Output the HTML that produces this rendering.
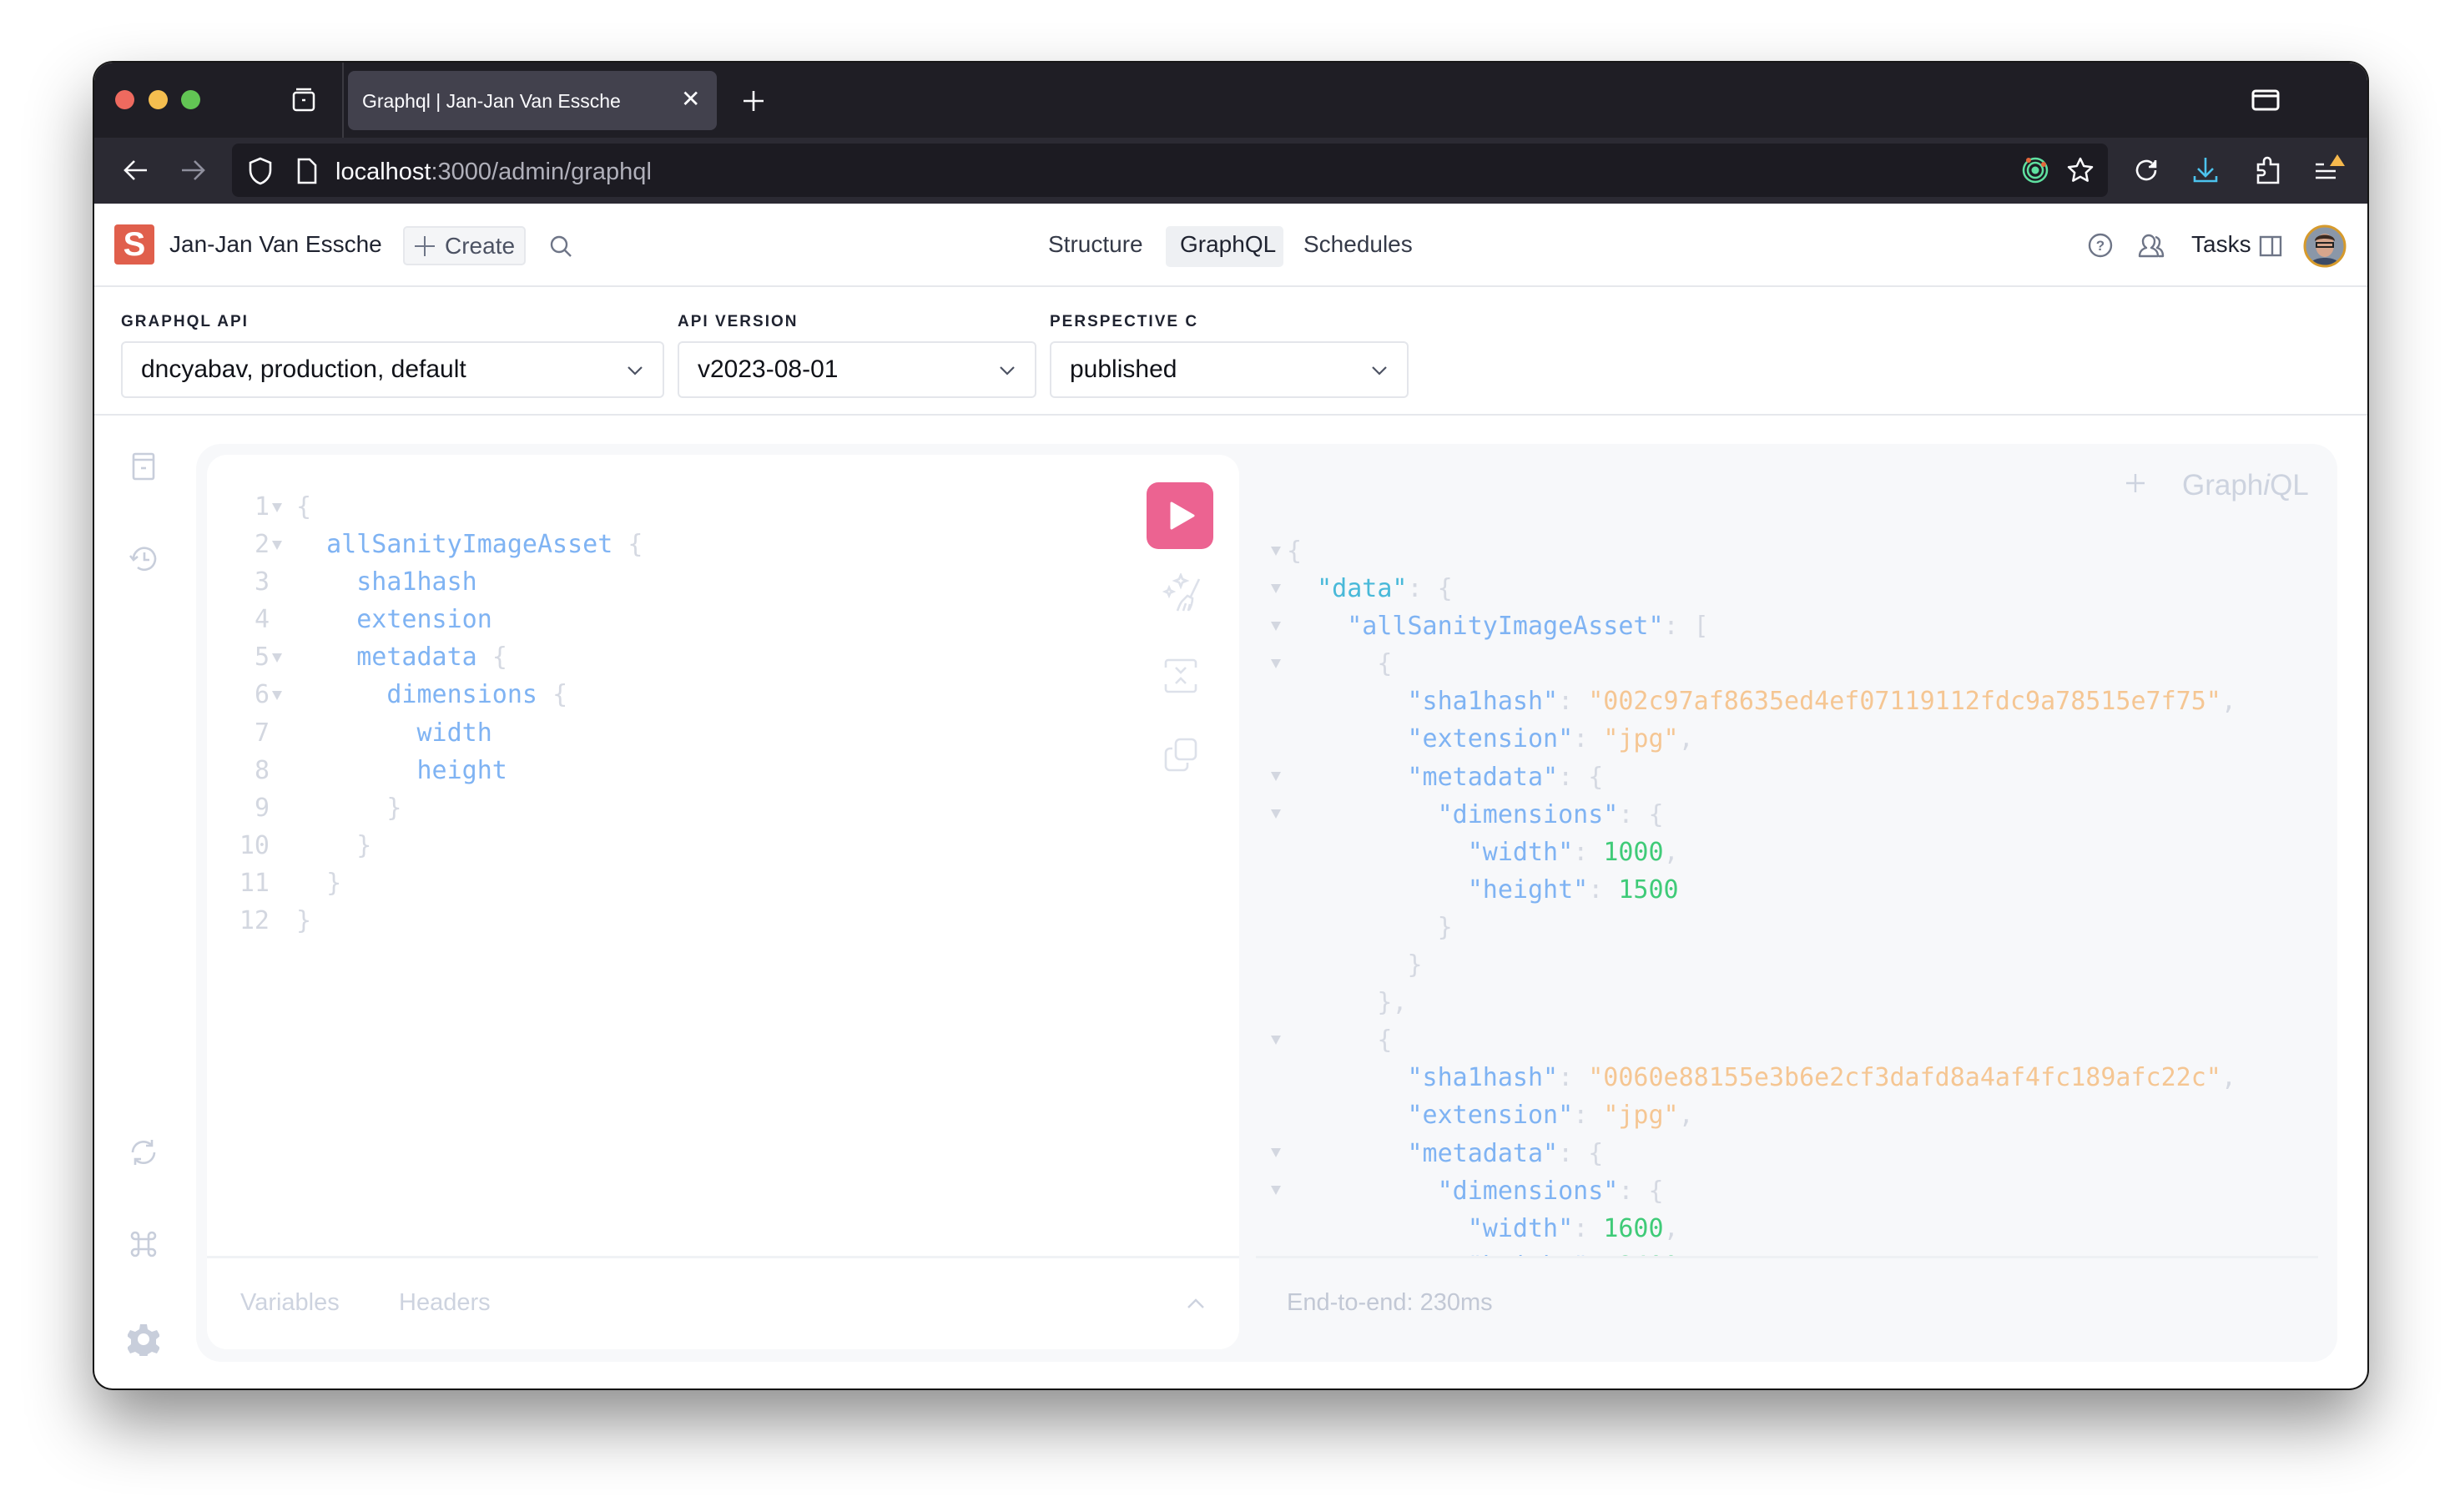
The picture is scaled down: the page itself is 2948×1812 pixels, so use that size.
<!DOCTYPE html>
<html><head><meta charset="utf-8"><style>
*{margin:0;padding:0;box-sizing:border-box}
body{width:2948px;height:1812px;background:#fff;position:relative;overflow:hidden;font-family:"Liberation Sans",sans-serif}
.a{position:absolute}
.win{left:113px;top:75px;width:2724px;height:1589px;border-radius:22px;background:#fff;overflow:hidden;box-shadow:0 40px 80px rgba(0,0,0,.45),0 0 0 2px #1a1a1a}
.mono{font-family:"DejaVu Sans Mono","Liberation Mono",monospace;font-size:30px}
.mono div{height:45.1px;line-height:45.1px;white-space:pre}
.ln{color:#d3d7e0;text-align:right}
.f{color:#7fb3f3}
.p{color:#d5d9e2}
.k{color:#7fb3f3}
.kd{color:#49b9d9}
.s{color:#f5c693}
.n{color:#3fcb78}
.tri{position:absolute;width:0;height:0;border-left:6px solid transparent;border-right:6px solid transparent;border-top:11px solid #d3d7e0}
.lbl{font-size:19px;font-weight:bold;letter-spacing:2px;color:#1f2330}
.sel{height:68px;border:2px solid #e4e6eb;border-radius:6px;background:#fff;font-size:30px;color:#101218;padding-left:22px;line-height:64px}
.chev{position:absolute;right:22px;top:22px}
</style></head><body>
<div class="a win">
  <!-- tab bar -->
  <div class="a" style="left:0;top:0;width:2724px;height:90px;background:#1f1e25"></div>
  <div class="a" style="left:25px;top:33px;width:23px;height:23px;border-radius:50%;background:#ee6a5f"></div>
  <div class="a" style="left:65px;top:33px;width:23px;height:23px;border-radius:50%;background:#f5be4f"></div>
  <div class="a" style="left:104px;top:33px;width:23px;height:23px;border-radius:50%;background:#62c554"></div>
  <svg class="a" style="left:236px;top:30px" width="30" height="30" viewBox="0 0 30 30" fill="none" stroke="#fff" stroke-width="2.5"><rect x="3" y="6" width="24" height="21" rx="3"/><line x1="6" y1="2" x2="24" y2="2"/><line x1="13" y1="15" x2="17" y2="15"/></svg>
  <div class="a" style="left:297px;top:0;width:2px;height:90px;background:#3a3940"></div>
  <div class="a" style="left:304px;top:10px;width:442px;height:71px;border-radius:8px;background:#42414d"></div>
  <div class="a" style="left:321px;top:29px;font-size:23px;color:#fbfbfe;line-height:34px">Graphql | Jan-Jan Van Essche</div>
  <div class="a" style="left:703px;top:27px;font-size:28px;color:#fbfbfe">✕</div>
  <svg class="a" style="left:776px;top:32px" width="28" height="28" viewBox="0 0 28 28" stroke="#fbfbfe" stroke-width="2.6"><path d="M14 2v24M2 14h24"/></svg>
  <svg class="a" style="left:2585px;top:32px" width="34" height="26" viewBox="0 0 34 26" fill="none" stroke="#fff" stroke-width="3"><rect x="2" y="2" width="30" height="22" rx="3"/><line x1="2" y1="8" x2="32" y2="8"/></svg>
  <!-- nav bar -->
  <div class="a" style="left:0;top:90px;width:2724px;height:79px;background:#2b2a33"></div>
  <div class="a" style="left:165px;top:97px;width:2248px;height:64px;border-radius:8px;background:#1c1b22"></div>
  <svg class="a" style="left:33px;top:114px" width="32" height="30" viewBox="0 0 32 30" fill="none" stroke="#fbfbfe" stroke-width="2.6"><path d="M30 15H4M15 4L4 15l11 11"/></svg>
  <svg class="a" style="left:103px;top:114px" width="32" height="30" viewBox="0 0 32 30" fill="none" stroke="#8f8f9d" stroke-width="2.6"><path d="M2 15h26M17 4l11 11-11 11"/></svg>
  <svg class="a" style="left:184px;top:113px" width="30" height="34" viewBox="0 0 30 34" fill="none" stroke="#fbfbfe" stroke-width="2.6"><path d="M15 2L3 7v9c0 8 6 14 12 16 6-2 12-8 12-16V7z"/></svg>
  <svg class="a" style="left:242px;top:113px" width="26" height="34" viewBox="0 0 26 34" fill="none" stroke="#fbfbfe" stroke-width="2.6"><path d="M3 3h13l7 7v21H3z"/></svg>
  <div class="a" style="left:289px;top:114px;font-size:29px;color:#fbfbfe;line-height:34px">localhost<span style="color:#b0b0ba">:3000/admin/graphql</span></div>
  <svg class="a" style="left:2309px;top:112px" width="34" height="34" viewBox="0 0 34 34" fill="none"><circle cx="17" cy="17" r="14" stroke="#5fe0a0" stroke-width="2.5"/><circle cx="17" cy="17" r="9" stroke="#5fe0a0" stroke-width="2.5"/><circle cx="17" cy="17" r="4.5" fill="#5fe0a0"/><circle cx="9" cy="5" r="3" fill="#e3673b"/><circle cx="27" cy="10" r="3" fill="#e3673b"/></svg>
  <svg class="a" style="left:2363px;top:112px" width="34" height="34" viewBox="0 0 34 34" fill="none" stroke="#fbfbfe" stroke-width="2.5" stroke-linejoin="round"><path d="M17 3l4.2 9 9.8 1.2-7.2 6.7 1.9 9.7L17 24.8l-8.7 4.8 1.9-9.7L3 13.2l9.8-1.2z"/></svg>
  <svg class="a" style="left:2443px;top:113px" width="32" height="32" viewBox="0 0 32 32" fill="none" stroke="#fbfbfe" stroke-width="2.6"><path d="M27 16a11 11 0 1 1-4-8.5"/><path d="M27 4v8h-8" fill="#fbfbfe"/></svg>
  <svg class="a" style="left:2514px;top:112px" width="32" height="34" viewBox="0 0 32 34" fill="none" stroke="#4cc3ee" stroke-width="2.6"><path d="M16 2v22M7 15l9 9 9-9M3 24v6h26v-6"/></svg>
  <svg class="a" style="left:2590px;top:111px" width="30" height="36" viewBox="0 0 30 36" fill="none" stroke="#fbfbfe" stroke-width="2.6"><path d="M3 33V24h5a3 3 0 0 0 0-6H3V11h7V7a4 4 0 0 1 8 0v4h9v22z"/></svg>
  <svg class="a" style="left:2660px;top:106px" width="40" height="40" viewBox="0 0 40 40" fill="none" stroke="#fbfbfe" stroke-width="2.6"><path d="M2 16h10M2 24h24M2 32h24"/><path d="M28 4l9 14H19z" fill="#f5b84d" stroke="none"/></svg>
  <!-- app header -->
  <div class="a" style="left:0;top:169px;width:2724px;height:100px;border-bottom:2px solid #e6e8ec"></div>
  <div class="a" style="left:24px;top:194px;width:48px;height:48px;border-radius:4px;background:#e05f4c;color:#fff;font-weight:bold;font-size:40px;text-align:center;line-height:48px">S</div>
  <div class="a" style="left:90px;top:202px;font-size:28px;color:#1f2330">Jan-Jan Van Essche</div>
  <div class="a" style="left:370px;top:196px;width:147px;height:47px;border:2px solid #e6e8ec;background:#f4f5f7;border-radius:5px;font-size:28px;color:#4c5263;line-height:43px;padding-left:48px">Create</div>
  <svg class="a" style="left:383px;top:207px" width="26" height="26" viewBox="0 0 26 26" stroke="#6e7587" stroke-width="2"><path d="M13 1v24M1 13h24"/></svg>
  <svg class="a" style="left:545px;top:206px" width="30" height="30" viewBox="0 0 30 30" fill="none" stroke="#6e7587" stroke-width="2.4"><circle cx="12" cy="12" r="9"/><path d="M19 19l7 7"/></svg>
  <div class="a" style="left:1143px;top:202px;font-size:28px;color:#353a48">Structure</div>
  <div class="a" style="left:1284px;top:196px;width:141px;height:49px;border-radius:5px;background:#eef0f3"></div>
  <div class="a" style="left:1301px;top:202px;font-size:28px;color:#1f2330">GraphQL</div>
  <div class="a" style="left:1449px;top:202px;font-size:28px;color:#353a48">Schedules</div>
  <svg class="a" style="left:2388px;top:203px" width="32" height="32" viewBox="0 0 32 32" fill="none" stroke="#6e7587" stroke-width="2.4"><circle cx="16" cy="16" r="13"/><text x="16" y="22" font-size="17" font-family="Liberation Sans" font-weight="bold" text-anchor="middle" fill="#6e7587" stroke="none">?</text></svg>
  <svg class="a" style="left:2448px;top:201px" width="34" height="34" viewBox="0 0 34 34" fill="none" stroke="#6e7587" stroke-width="2.4" stroke-linejoin="round"><path d="M3 31c0-6 4-9 8-10-3-2-4-5-4-8a7 7 0 0 1 14 0c0 3-1 6-4 8 4 1 8 4 8 10z"/><path d="M22 8a6 6 0 0 1 5 6c0 3-1 5-3 7 4 1 7 4 7 10h-5"/></svg>
  <div class="a" style="left:2513px;top:202px;font-size:28px;color:#1f2330">Tasks</div>
  <svg class="a" style="left:2594px;top:207px" width="28" height="26" viewBox="0 0 28 26" fill="none" stroke="#6e7587" stroke-width="2.4"><rect x="2" y="2" width="24" height="22"/><line x1="16" y1="2" x2="16" y2="24"/></svg>
  <svg class="a" style="left:2647px;top:194px" width="52" height="52" viewBox="0 0 52 52"><defs><clipPath id="c"><circle cx="26" cy="26" r="23"/></clipPath></defs><g clip-path="url(#c)"><rect width="52" height="52" fill="#8a97a8"/><ellipse cx="26" cy="25" rx="11" ry="14" fill="#d6a58c"/><path d="M14 20c0-10 24-10 24 0-4-4-20-4-24 0z" fill="#3a2a22"/><rect x="16" y="22" width="20" height="5" fill="none" stroke="#222" stroke-width="2"/><path d="M6 52c2-10 12-12 20-12s18 2 20 12z" fill="#3b4a66"/></g><circle cx="26" cy="26" r="24" fill="none" stroke="#d69a2c" stroke-width="3"/></svg>
  <!-- form -->
  <div class="a" style="left:0;top:269px;width:2724px;height:154px;border-bottom:2px solid #e6e8ec"></div>
  <div class="a lbl" style="left:32px;top:300px">GRAPHQL API</div>
  <div class="a lbl" style="left:699px;top:300px">API VERSION</div>
  <div class="a lbl" style="left:1145px;top:300px">PERSPECTIVE C</div>
  <div class="a sel" style="left:32px;top:334px;width:651px">dncyabav, production, default<svg class="chev" width="22" height="22" viewBox="0 0 22 22" fill="none" stroke="#4c5263" stroke-width="2.2"><path d="M3 7l8 8 8-8"/></svg></div>
  <div class="a sel" style="left:699px;top:334px;width:430px">v2023-08-01<svg class="chev" width="22" height="22" viewBox="0 0 22 22" fill="none" stroke="#4c5263" stroke-width="2.2"><path d="M3 7l8 8 8-8"/></svg></div>
  <div class="a sel" style="left:1145px;top:334px;width:430px">published<svg class="chev" width="22" height="22" viewBox="0 0 22 22" fill="none" stroke="#4c5263" stroke-width="2.2"><path d="M3 7l8 8 8-8"/></svg></div>
  <!-- left sidebar icons -->
  <svg class="a" style="left:44px;top:466px" width="30" height="36" viewBox="0 0 30 36" fill="none" stroke="#c8cedb" stroke-width="2.6"><rect x="3" y="3" width="24" height="30" rx="2"/><line x1="3" y1="10" x2="27" y2="10"/><line x1="12" y1="20" x2="18" y2="20"/></svg>
  <svg class="a" style="left:40px;top:576px" width="38" height="38" viewBox="0 0 38 38" fill="none" stroke="#c8cedb" stroke-width="2.6"><path d="M7 19a13 13 0 1 1 5 10"/><path d="M3 15l4 5 5-4"/><path d="M20 11v9h6"/></svg>
  <svg class="a" style="left:41px;top:1288px" width="36" height="36" viewBox="0 0 36 36" fill="none" stroke="#c8cedb" stroke-width="2.6"><path d="M5 18a13 13 0 0 1 23-8"/><path d="M31 18a13 13 0 0 1-23 8"/><path d="M28 3v7h-7M8 33v-7h7"/></svg>
  <svg class="a" style="left:41px;top:1398px" width="36" height="36" viewBox="0 0 36 36" fill="none" stroke="#c8cedb" stroke-width="2.6"><path d="M12 12h12v12H12zM12 12H8a4 4 0 1 1 4-4zM24 12V8a4 4 0 1 1 4 4zM24 24h4a4 4 0 1 1-4 4zM12 24v4a4 4 0 1 1-4-4z"/></svg>
  <svg class="a" style="left:40px;top:1510px" width="38" height="40" viewBox="0 0 38 40" fill="#c8cedb"><path d="M15 2h8l1 6 5 3 6-2 4 7-5 4v6l5 4-4 7-6-2-5 3-1 6h-8l-1-6-5-3-6 2-4-7 5-4v-6l-5-4 4-7 6 2 5-3z"/><circle cx="19" cy="20" r="7" fill="#fff"/></svg>
  <!-- graphiql container -->
  <div class="a" style="left:122px;top:457px;width:2566px;height:1100px;border-radius:30px;background:#f7f8fa"></div>
  <div class="a" style="left:135px;top:470px;width:1237px;height:1072px;border-radius:24px;background:#fff"></div>
  <div class="a" style="left:135px;top:1430px;width:1237px;height:3px;background:#f0f2f5"></div>
  <div class="a" style="left:1392px;top:1430px;width:1273px;height:3px;background:#eef0f3"></div>
  <!-- editor line numbers -->
  <div class="a mono ln" style="left:130px;top:510px;width:80px"><div>1</div><div>2</div><div>3</div><div>4</div><div>5</div><div>6</div><div>7</div><div>8</div><div>9</div><div>10</div><div>11</div><div>12</div></div>
  <div class="tri" style="left:213px;top:528px"></div>
  <div class="tri" style="left:213px;top:573px"></div>
  <div class="tri" style="left:213px;top:708px"></div>
  <div class="tri" style="left:213px;top:753px"></div>
  <div class="a mono" style="left:242px;top:510px"><div><span class="p">{</span></div><div>  <span class="f">allSanityImageAsset</span> <span class="p">{</span></div><div>    <span class="f">sha1hash</span></div><div>    <span class="f">extension</span></div><div>    <span class="f">metadata</span> <span class="p">{</span></div><div>      <span class="f">dimensions</span> <span class="p">{</span></div><div>        <span class="f">width</span></div><div>        <span class="f">height</span></div><div>      <span class="p">}</span></div><div>    <span class="p">}</span></div><div>  <span class="p">}</span></div><div><span class="p">}</span></div></div>
  <div class="a" style="left:1261px;top:503px;width:80px;height:80px;border-radius:14px;background:#ec6391"></div>
  <svg class="a" style="left:1286px;top:524px" width="34" height="38" viewBox="0 0 34 38"><path d="M5 4l26 15L5 34z" fill="#fff" stroke="#fff" stroke-width="3" stroke-linejoin="round"/></svg>
  <svg class="a" style="left:1280px;top:612px" width="50" height="50" viewBox="0 0 50 50" fill="none" stroke="#dde1ea" stroke-width="2.6"><path d="M22 2l2 5 5 2-5 2-2 5-2-5-5-2 5-2zM8 17l1.5 3.5L13 22l-3.5 1.5L8 27l-1.5-3.5L3 22l3.5-1.5z"/><path d="M44 7L33 30M24 33l6-6 6 3c0 6-2 10-4 14M24 33c-3 3-4 7-6 12M28 36l-3 9M33 37l-2 8"/></svg>
  <svg class="a" style="left:1280px;top:713px" width="44" height="44" viewBox="0 0 44 44" fill="none" stroke="#dde1ea" stroke-width="2.6"><path d="M4 12V6a3 3 0 0 1 3-3h30a3 3 0 0 1 3 3v6M4 32v6a3 3 0 0 0 3 3h30a3 3 0 0 0 3-3v-6M16 12l6 6 6-6M16 31l6-6 6 6"/></svg>
  <svg class="a" style="left:1280px;top:808px" width="44" height="44" viewBox="0 0 44 44" fill="none" stroke="#dde1ea" stroke-width="2.6"><rect x="16" y="3" width="24" height="24" rx="5"/><path d="M12 14H9a5 5 0 0 0-5 5v16a5 5 0 0 0 5 5h16a5 5 0 0 0 5-5v-4"/></svg>
  <div class="a" style="left:175px;top:1470px;font-size:29px;color:#cdd3df">Variables</div>
  <div class="a" style="left:365px;top:1470px;font-size:29px;color:#cdd3df">Headers</div>
  <svg class="a" style="left:1308px;top:1478px" width="24" height="18" viewBox="0 0 24 18" fill="none" stroke="#cdd3df" stroke-width="2.4"><path d="M3 14l9-9 9 9"/></svg>
  <!-- result header -->
  <svg class="a" style="left:2434px;top:492px" width="24" height="24" viewBox="0 0 24 24" stroke="#cdd3df" stroke-width="2.4"><path d="M12 1v22M1 12h22"/></svg>
  <div class="a" style="left:2502px;top:487px;font-size:35px;color:#cdd3df">Graph<i>i</i>QL</div>
  <!-- result -->
  <div class="a" style="left:1392px;top:500px;width:1290px;height:930px;overflow:hidden">
  <div class="tri" style="left:18px;top:80px"></div>
  <div class="tri" style="left:18px;top:125px"></div>
  <div class="tri" style="left:18px;top:170px"></div>
  <div class="tri" style="left:18px;top:215px"></div>
  <div class="tri" style="left:18px;top:350px"></div>
  <div class="tri" style="left:18px;top:395px"></div>
  <div class="tri" style="left:18px;top:666px"></div>
  <div class="tri" style="left:18px;top:801px"></div>
  <div class="tri" style="left:18px;top:846px"></div>
  <div class="a mono" style="left:37px;top:63px"><div><span class="p">{</span></div><div>  <span class="kd">"data"</span><span class="p">: {</span></div><div>    <span class="k">"allSanityImageAsset"</span><span class="p">: [</span></div><div>      <span class="p">{</span></div><div>        <span class="k">"sha1hash"</span><span class="p">: </span><span class="s">"002c97af8635ed4ef07119112fdc9a78515e7f75"</span><span class="p">,</span></div><div>        <span class="k">"extension"</span><span class="p">: </span><span class="s">"jpg"</span><span class="p">,</span></div><div>        <span class="k">"metadata"</span><span class="p">: {</span></div><div>          <span class="k">"dimensions"</span><span class="p">: {</span></div><div>            <span class="k">"width"</span><span class="p">: </span><span class="n">1000</span><span class="p">,</span></div><div>            <span class="k">"height"</span><span class="p">: </span><span class="n">1500</span></div><div>          <span class="p">}</span></div><div>        <span class="p">}</span></div><div>      <span class="p">},</span></div><div>      <span class="p">{</span></div><div>        <span class="k">"sha1hash"</span><span class="p">: </span><span class="s">"0060e88155e3b6e2cf3dafd8a4af4fc189afc22c"</span><span class="p">,</span></div><div>        <span class="k">"extension"</span><span class="p">: </span><span class="s">"jpg"</span><span class="p">,</span></div><div>        <span class="k">"metadata"</span><span class="p">: {</span></div><div>          <span class="k">"dimensions"</span><span class="p">: {</span></div><div>            <span class="k">"width"</span><span class="p">: </span><span class="n">1600</span><span class="p">,</span></div><div>            <span class="k">"height"</span><span class="p">: </span><span class="n">2400</span></div></div>
  </div>
  <div class="a" style="left:1429px;top:1470px;font-size:29px;color:#c2c8d5">End-to-end: 230ms</div>
</div>
</body></html>
